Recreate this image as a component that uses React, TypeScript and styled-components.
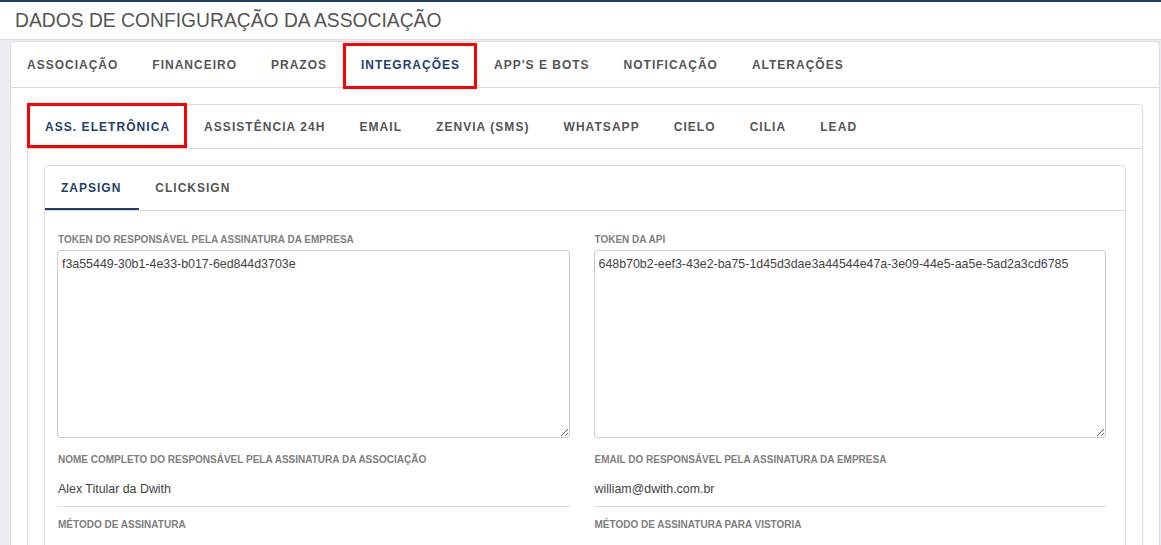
import * as React from 'react';
import styled, { createGlobalStyle } from 'styled-components';

const GlobalStyle = createGlobalStyle`
    html, body {
        margin: 0;
        padding: 0;
        background-color: #ececf3;
        font-family: "Liberation Sans", Arial, sans-serif;
        overflow: hidden;
    }
`;

const topTabs = ['ASSOCIAÇÃO', 'FINANCEIRO', 'PRAZOS', 'INTEGRAÇÕES', "APP'S E BOTS", 'NOTIFICAÇÃO', 'ALTERAÇÕES'];
const integrationTabs = ['ASS. ELETRÔNICA', 'ASSISTÊNCIA 24H', 'EMAIL', 'ZENVIA (SMS)', 'WHATSAPP', 'CIELO', 'CILIA', 'LEAD'];
const signTabs = ['ZAPSIGN', 'CLICKSIGN'];

const App: React.FC = () => {
    return (
        <>
            <GlobalStyle />
            <Header>DADOS DE CONFIGURAÇÃO DA ASSOCIAÇÃO</Header>
            <Page>
                <Card>
                    <TabBar height={45}>
                        {topTabs.map((t) => (
                            <Tab key={t} active={t === 'INTEGRAÇÕES'}>
                                {t}
                                {t === 'INTEGRAÇÕES' && <MarkTop />}
                            </Tab>
                        ))}
                    </TabBar>
                    <CardBody>
                        <Card>
                            <TabBar height={43}>
                                {integrationTabs.map((t) => (
                                    <SubTab key={t} active={t === 'ASS. ELETRÔNICA'}>
                                        {t}
                                        {t === 'ASS. ELETRÔNICA' && <MarkSub />}
                                    </SubTab>
                                ))}
                            </TabBar>
                            <CardBody>
                                <Card>
                                    <TabBar height={44}>
                                        {signTabs.map((t) => (
                                            <Tab key={t} active={t === 'ZAPSIGN'} underlined={t === 'ZAPSIGN'}>{t}</Tab>
                                        ))}
                                    </TabBar>
                                    <FormGrid>
                                        <Field>
                                            <Label>TOKEN DO RESPONSÁVEL PELA ASSINATURA DA EMPRESA</Label>
                                            <TokenArea readOnly defaultValue="f3a55449-30b1-4e33-b017-6ed844d3703e" />
                                        </Field>
                                        <Field>
                                            <Label>TOKEN DA API</Label>
                                            <TokenArea readOnly defaultValue="648b70b2-eef3-43e2-ba75-1d45d3dae3a44544e47a-3e09-44e5-aa5e-5ad2a3cd6785" />
                                        </Field>
                                        <Field>
                                            <Label>NOME COMPLETO DO RESPONSÁVEL PELA ASSINATURA DA ASSOCIAÇÃO</Label>
                                            <Value>Alex Titular da Dwith</Value>
                                        </Field>
                                        <Field>
                                            <Label>EMAIL DO RESPONSÁVEL PELA ASSINATURA DA EMPRESA</Label>
                                            <Value>william@dwith.com.br</Value>
                                        </Field>
                                        <Field>
                                            <Label>MÉTODO DE ASSINATURA</Label>
                                            <Value />
                                        </Field>
                                        <Field>
                                            <Label>MÉTODO DE ASSINATURA PARA VISTORIA</Label>
                                            <Value />
                                        </Field>
                                    </FormGrid>
                                </Card>
                            </CardBody>
                        </Card>
                    </CardBody>
                </Card>
            </Page>
        </>
    );
};

const Header = styled.header`
    display: flex;
    align-items: center;
    height: 36px;
    padding: 1px 0 0 15px;
    background-color: #fff;
    border-top: 2px solid #1f3d6c;
    border-bottom: 1px solid #dcdce6;
    color: #555;
    font-size: 19.3px;
`;

const Page = styled.main`
    padding: 1px 1px 0 10px;
`;

const Card = styled.section`
    background-color: #fff;
    border: 1px solid #dcdcdc;
    border-radius: 4px;
`;

const CardBody = styled.div`
    padding: 16px;
`;

const TabBar = styled.nav<{ height: number }>`
    display: flex;
    height: ${(p) => p.height}px;
    border-bottom: 1px solid #dcdcdc;
`;

const Tab = styled.div<{ active?: boolean; underlined?: boolean }>`
    position: relative;
    display: flex;
    align-items: center;
    padding: 0 18px 0 16px;
    font-size: 12px;
    font-weight: bold;
    letter-spacing: 1px;
    color: ${(p) => (p.active ? '#1d3f6e' : '#555')};
    ${(p) => p.underlined && `box-shadow: inset 0 -2px 0 #1d3f6e;`}
`;

const SubTab = styled(Tab)`
    padding: 0 17px;
    letter-spacing: 1.05px;
`;

// red highlight frames drawn over the selected tabs
const MarkTop = styled.span`
    position: absolute;
    left: -2px;
    right: 1px;
    top: 1px;
    bottom: -2px;
    border: 3px solid #ff0000;
`;

const MarkSub = styled.span`
    position: absolute;
    left: -1px;
    right: 0;
    top: -2px;
    bottom: 0;
    border: 3px solid #ff0000;
`;

const FormGrid = styled.div`
    display: grid;
    grid-template-columns: 1fr 1fr;
    column-gap: 24px;
    padding: 23px 19px 0 12px;
`;

const Field = styled.div`
    display: flex;
    flex-direction: column;
`;

const Label = styled.label`
    display: block;
    margin-bottom: 4px;
    padding-left: 1px;
    font-size: 10px;
    line-height: 12px;
    font-weight: bold;
    color: #808080;
`;

const TokenArea = styled.textarea`
    box-sizing: border-box;
    height: 188px;
    margin: 0 0 16px;
    padding: 6px 4px;
    border: 1px solid #ccc;
    border-radius: 4px;
    font-family: "Liberation Sans", Arial, sans-serif;
    font-size: 12.4px;
    line-height: 14px;
    color: #444;
    resize: vertical;
    outline: none;
`;

const Value = styled.div`
    height: 24px;
    padding: 12px 0 0 1px;
    margin-bottom: 12px;
    line-height: 14px;
    border-bottom: 1px solid #ddd;
    font-size: 12.4px;
    color: #444;
`;

export default App;
